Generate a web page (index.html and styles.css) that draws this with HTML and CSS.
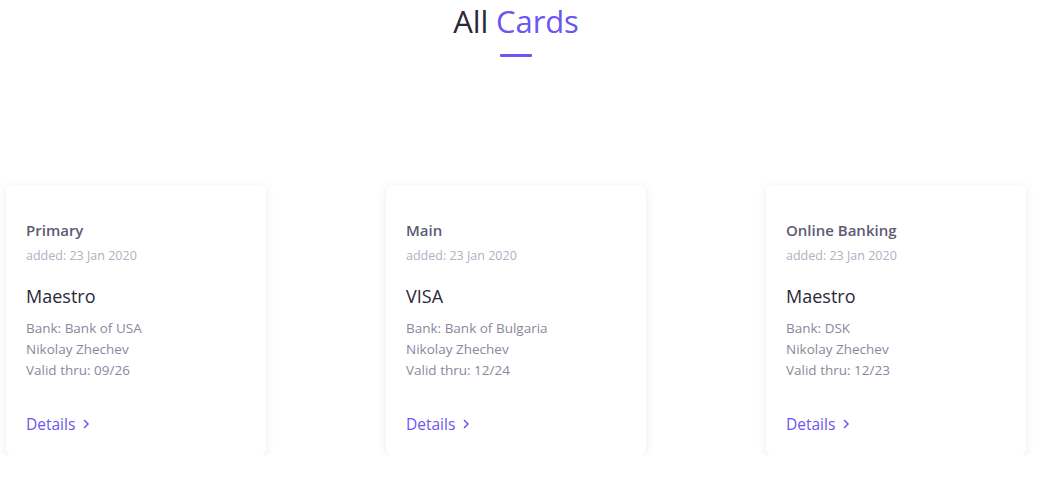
FILE: index.html
```html
<!DOCTYPE html>
<html>
<head>
<meta charset="utf-8">
<link rel="stylesheet" href="styles.css">
</head>
<body>
<div class="page">
  <header class="head">
    <h1 class="title">All <span class="accent">Cards</span></h1>
    <div class="bar"></div>
  </header>
  <section class="cards">
    <article class="card">
      <div class="name">Primary</div>
      <div class="added">added: 23 Jan 2020</div>
      <div class="type">Maestro</div>
      <div class="info">
        <div>Bank: Bank of USA</div>
        <div>Nikolay Zhechev</div>
        <div>Valid thru: 09/26</div>
      </div>
      <a class="details" href="#">Details <svg width="10" height="12" viewBox="0 0 10 12"><path d="M3 2 L7 6 L3 10" fill="none" stroke="currentColor" stroke-width="1.5"/></svg></a>
    </article>
    <article class="card">
      <div class="name">Main</div>
      <div class="added">added: 23 Jan 2020</div>
      <div class="type">VISA</div>
      <div class="info">
        <div>Bank: Bank of Bulgaria</div>
        <div>Nikolay Zhechev</div>
        <div>Valid thru: 12/24</div>
      </div>
      <a class="details" href="#">Details <svg width="10" height="12" viewBox="0 0 10 12"><path d="M3 2 L7 6 L3 10" fill="none" stroke="currentColor" stroke-width="1.5"/></svg></a>
    </article>
    <article class="card">
      <div class="name">Online Banking</div>
      <div class="added">added: 23 Jan 2020</div>
      <div class="type">Maestro</div>
      <div class="info">
        <div>Bank: DSK</div>
        <div>Nikolay Zhechev</div>
        <div>Valid thru: 12/23</div>
      </div>
      <a class="details" href="#">Details <svg width="10" height="12" viewBox="0 0 10 12"><path d="M3 2 L7 6 L3 10" fill="none" stroke="currentColor" stroke-width="1.5"/></svg></a>
    </article>
  </section>
</div>
</body>
</html>
```
FILE: styles.css
```css
* { box-sizing: border-box; }
html, body { margin: 0; padding: 0; background: #fff; }
body { font-family: "Open Sans", "Noto Sans", sans-serif; }
.page { width: 1032px; }
.head { display: flex; flex-direction: column; align-items: center; }
.title {
  margin: 0;
  font-size: 31px;
  font-weight: 400;
  line-height: 42px;
  color: #2b2838;
  letter-spacing: -0.1px;
}
.accent { color: #6c55f0; }
.bar { width: 32px; height: 3px; background: #6c55f0; margin-top: 12px; border-radius: 1px; }
.cards {
  display: flex;
  justify-content: space-between;
  padding: 0 6px;
  margin-top: 128px;
}
.card {
  width: 260px;
  height: 270px;
  background: #fff;
  border-radius: 6px;
  box-shadow: 0 2px 10px rgba(60, 50, 110, 0.09);
  padding: 33px 20px 19px;
  display: flex;
  flex-direction: column;
}
.name { font-size: 15px; line-height: 24px; font-weight: 600; color: #5d5a72; }
.added { font-size: 12.5px; line-height: 20px; color: #b3afc2; margin-top: 4px; }
.type { font-size: 18px; line-height: 26px; font-weight: 500; color: #2b2838; margin-top: 17px; }
.info { font-size: 13.5px; line-height: 21px; color: #8b879b; margin-top: 9px; }
.details {
  margin-top: auto;
  font-size: 15.5px;
  line-height: 24px;
  color: #6c55f0;
  text-decoration: none;
  display: flex;
  align-items: center;
  gap: 6px;
}
```
